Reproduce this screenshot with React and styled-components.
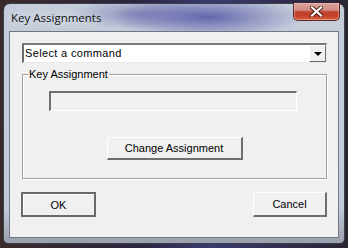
import React from 'react';
import styled, { createGlobalStyle } from 'styled-components';

const GlobalStyle = createGlobalStyle`
  html, body {
    margin: 0;
    padding: 0;
    background: #2a2432;
    overflow: hidden;
  }
`;

const Screen = styled.div`
  width: 348px;
  height: 248px;
  box-sizing: border-box;
  padding: 3px 3px 4px 3px;
  background:
    linear-gradient(90deg, #3b2a2a 0%, #2c2540 40%, #3a3a70 60%, #2a2432 100%);
`;

const Window = styled.div`
  height: 100%;
  box-sizing: border-box;
  display: flex;
  flex-direction: column;
  padding: 0 5px 5px 5px;
  border: 1px solid #3a3f4c;
  border-radius: 7px 7px 5px 5px;
  background:
    radial-gradient(ellipse 95px 22px at 60% 13px, rgba(84, 84, 165, 0.85), rgba(120, 120, 180, 0) 100%),
    radial-gradient(ellipse 70px 16px at 40% 10px, rgba(100, 100, 165, 0.6), rgba(110, 110, 170, 0) 100%),
    linear-gradient(180deg, #c5cddb 0%, #c3cbd9 85%, #9aa0ab 100%);
`;

const TitleBar = styled.div`
  height: 27px;
  flex: none;
  display: flex;
  justify-content: space-between;
  align-items: flex-start;
  padding-left: 2px;
`;

const Title = styled.span`
  font-family: "Open Sans", "Noto Sans", sans-serif;
  font-size: 11.5px;
  line-height: 16px;
  padding-top: 6px;
  color: #111;
  text-shadow: 0 0 8px rgba(255, 255, 255, 0.9);
`;

const CloseButton = styled.div`
  width: 45px;
  height: 17px;
  margin: -1px -1px 0 0;
  display: flex;
  align-items: center;
  justify-content: center;
  border: 1px solid #5c2a26;
  border-top: none;
  border-radius: 0 0 5px 5px;
  box-shadow: inset 0 0 0 1px rgba(255, 200, 190, 0.45);
  background: linear-gradient(180deg, #dca59c 0%, #d28c84 42%, #bf442f 52%, #c6402b 75%, #d8613f 100%);
`;

const Client = styled.div`
  flex: 1;
  display: flex;
  flex-direction: column;
  background: #f0f0f0;
  border: 1px solid #6f7684;
  padding: 11px 11px 0 12px;
  font-family: "Liberation Sans", Arial, sans-serif;
  font-size: 11px;
  color: #000;
`;

const Combo = styled.div`
  height: 20px;
  box-sizing: border-box;
  display: flex;
  align-items: stretch;
  background: #fff;
  border-style: solid;
  border-width: 2px 1px 1px 2px;
  border-color: #7a7a7a #e8e8e8 #e8e8e8 #6c6c6c;
`;

const ComboText = styled.span`
  flex: 1;
  line-height: 16px;
  padding-left: 1px;
  letter-spacing: 0.35px;
`;

const DropButton = styled.div`
  width: 15px;
  display: flex;
  align-items: center;
  justify-content: center;
  background: #f0f0f0;
  border-style: solid;
  border-width: 1px;
  border-color: #fff #6a6a6a #6a6a6a #fff;
`;

const Arrow = styled.div`
  width: 0;
  height: 0;
  border-left: 4px solid transparent;
  border-right: 4px solid transparent;
  border-top: 4px solid #000;
`;

const Group = styled.fieldset`
  margin: 5px 0 0 0;
  padding: 10px 0 18px 0;
  min-width: 0;
  display: flex;
  flex-direction: column;
  align-items: center;
  gap: 26px;
  border: 1px solid #a0a0a0;
  box-shadow: inset 1px 1px 0 #fff, 1px 1px 0 #fff;
`;

const Legend = styled.legend`
  margin-left: 5px;
  padding: 0 1px;
  line-height: 13px;
`;

const Field = styled.div`
  width: 248px;
  height: 20px;
  box-sizing: border-box;
  margin-right: 3px;
  background: #f0f0f0;
  border-style: solid;
  border-width: 2px 1px 1px 2px;
  border-color: #6f6f6f #fff #fff #6f6f6f;
`;

const Button = styled.div`
  width: ${p => p.$width}px;
  height: ${p => p.$height || 23}px;
  box-sizing: border-box;
  display: flex;
  align-items: center;
  justify-content: center;
  background: #f0f0f0;
  border-style: solid;
  border-width: ${p => (p.$default ? '2px' : '1px 2px 2px 1px')};
  border-color: ${p => (p.$default ? '#6a6a6a' : '#fff #6e6e6e #6e6e6e #fff')};
  box-shadow: ${p => (p.$default ? 'inset 1px 1px 0 #fff' : 'none')};
`;

const Footer = styled.div`
  display: flex;
  justify-content: space-between;
  margin: 13px 0 0 -1px;
`;

const CloseGlyph = () => (
  <svg width="13" height="11" viewBox="0 0 13 11">
    <path d="M2 1.5 L11 9.5 M11 1.5 L2 9.5" stroke="#4a1a16" strokeWidth="4" strokeLinecap="square" />
    <path d="M2 1.5 L11 9.5 M11 1.5 L2 9.5" stroke="#fff" strokeWidth="2.2" strokeLinecap="square" />
  </svg>
);

const App = () => (
  <>
    <GlobalStyle />
    <Screen>
      <Window>
        <TitleBar>
          <Title>Key Assignments</Title>
          <CloseButton><CloseGlyph /></CloseButton>
        </TitleBar>
        <Client>
          <Combo>
            <ComboText>Select a command</ComboText>
            <DropButton><Arrow /></DropButton>
          </Combo>
          <Group>
            <Legend>Key Assignment</Legend>
            <Field />
            <Button $width={136}>Change Assignment</Button>
          </Group>
          <Footer>
            <Button $width={75} $height={25} $default>OK</Button>
            <Button $width={74} $height={25}>Cancel</Button>
          </Footer>
        </Client>
      </Window>
    </Screen>
  </>
);

export default App;
